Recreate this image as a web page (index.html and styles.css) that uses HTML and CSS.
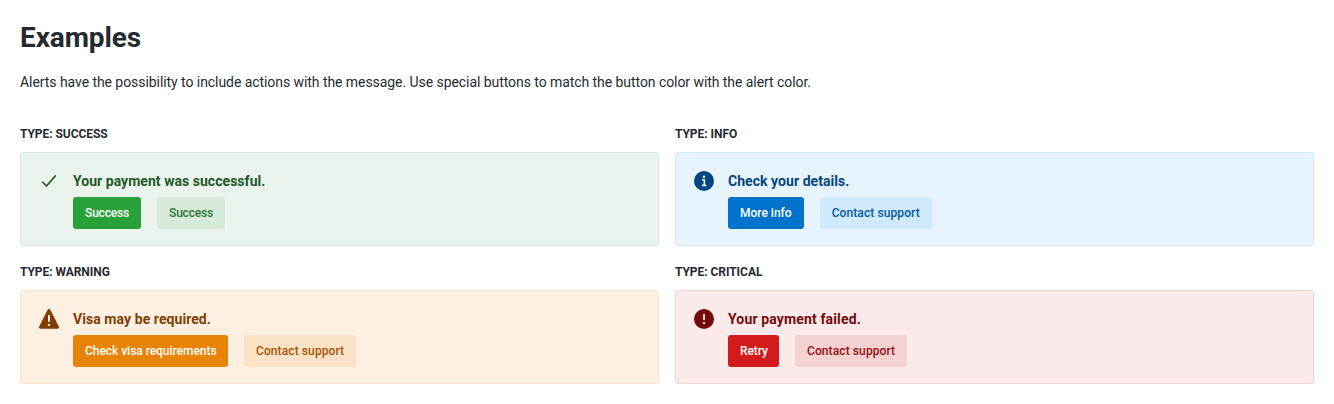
FILE: index.html
```html
<!DOCTYPE html>
<html lang="en">
<head>
<meta charset="utf-8">
<title>Examples</title>
<link rel="stylesheet" href="styles.css">
</head>
<body>
<main class="page">
  <h1 class="title">Examples</h1>
  <p class="intro">Alerts have the possibility to include actions with the message. Use special buttons to match the button color with the alert color.</p>
  <div class="grid">
    <section class="success">
      <h2 class="label">Type: success</h2>
      <div class="alert">
        <svg class="icon" viewBox="0 0 24 24"><path d="M4.500 13.500 9 18 19.500 6" fill="none" stroke="currentColor" stroke-width="2.100" stroke-linecap="round" stroke-linejoin="round"/></svg>
        <div class="content">
          <div class="heading">Your payment was successful.</div>
          <div class="actions"><button class="btn main tight">Success</button><button class="btn subtle tight">Success</button></div>
        </div>
      </div>
    </section>
    <section class="info">
      <h2 class="label">Type: info</h2>
      <div class="alert">
        <svg class="icon" viewBox="0 0 24 24"><circle cx="12" cy="12" r="12" fill="currentColor"/><circle cx="12" cy="7" r="1.500" fill="#e8f4fd"/><path d="M9.600 10.400h2.800v6.400M9.600 17.200h5.200" fill="none" stroke="#e8f4fd" stroke-width="1.900"/></svg>
        <div class="content">
          <div class="heading">Check your details.</div>
          <div class="actions"><button class="btn main">More info</button><button class="btn subtle wide">Contact support</button></div>
        </div>
      </div>
    </section>
    <section class="warning">
      <h2 class="label">Type: warning</h2>
      <div class="alert">
        <svg class="icon" viewBox="0 0 24 24"><path d="M12 2.200 22 21.800H2Z" fill="currentColor" stroke="currentColor" stroke-width="4" stroke-linejoin="round"/><path d="M12 7.200v8" stroke="#fdf0e3" stroke-width="2.300"/><circle cx="12" cy="19" r="1.400" fill="#fdf0e3"/></svg>
        <div class="content">
          <div class="heading">Visa may be required.</div>
          <div class="actions"><button class="btn main check">Check visa requirements</button><button class="btn subtle wide">Contact support</button></div>
        </div>
      </div>
    </section>
    <section class="critical">
      <h2 class="label">Type: critical</h2>
      <div class="alert">
        <svg class="icon" viewBox="0 0 24 24"><circle cx="12" cy="12" r="12" fill="currentColor"/><path d="M12 6v7.200" stroke="#faeaea" stroke-width="2.200"/><circle cx="12" cy="16.800" r="1.400" fill="#faeaea"/></svg>
        <div class="content">
          <div class="heading">Your payment failed.</div>
          <div class="actions"><button class="btn main retry">Retry</button><button class="btn subtle wide">Contact support</button></div>
        </div>
      </div>
    </section>
  </div>
</main>
</body>
</html>
```

FILE: styles.css
```css
* { box-sizing: border-box; }
body { margin: 0; background: #fff; color: #252a31; font-family: Roboto, sans-serif; }
.page { padding: 20px; }
.title { margin: 0; font-size: 28px; line-height: 36px; font-weight: 700; letter-spacing: -0.1px; }
.intro { margin: 16px 0 32px; font-size: 14px; line-height: 20px; letter-spacing: -0.061px; }
.grid { display: grid; grid-template-columns: 1fr 1fr; gap: 16px; }
.label { margin: 0 0 8px; font-size: 12px; line-height: 20px; font-weight: 700; text-transform: uppercase; letter-spacing: -0.05px; }
.alert { display: flex; height: 94px; padding: 18px; border: 1px solid var(--line); border-radius: 3px; background: var(--bg); color: var(--fg); }
.icon { display: block; flex: none; width: 20px; height: 20px; margin-right: 14px; overflow: visible; }
.heading { font-size: 14px; line-height: 20px; font-weight: 700; letter-spacing: var(--track); }
.actions { display: flex; gap: 16px; margin-top: 6px; }
.btn { height: 32px; padding: 0 12px; border: 0; border-radius: 3px; font: 500 12px/16px Roboto, sans-serif; white-space: nowrap; }
.main { background: var(--main); color: #fff; }
.subtle { background: var(--subtle); color: var(--subtle-fg); }
.tight { width: 68px; letter-spacing: -0.2px; }
.wide { width: 112px; letter-spacing: 0.1px; }
.check { width: 155px; letter-spacing: -0.04px; }
.retry { width: 51px; letter-spacing: -0.1px; }
.success { --track: 0.04px; --bg: #ebf4ec; --line: #d7ead9; --fg: #235828; --main: #28a138; --subtle: #d7ead9; --subtle-fg: #2d7738; }
.info { --track: 0.05px; --bg: #e8f4fd; --line: #d0e9fb; --fg: #004680; --main: #0172cb; --subtle: #d0e9fb; --subtle-fg: #005aa3; }
.warning { --track: 0.07px; --bg: #fdf0e3; --line: #fae2c7; --fg: #803d00; --main: #e98305; --subtle: #fae2c7; --subtle-fg: #a75400; }
.critical { --track: 0.14px; --bg: #faeaea; --line: #f4d2d2; --fg: #760909; --main: #d21c1c; --subtle: #f4d2d2; --subtle-fg: #970c0c; }
```
